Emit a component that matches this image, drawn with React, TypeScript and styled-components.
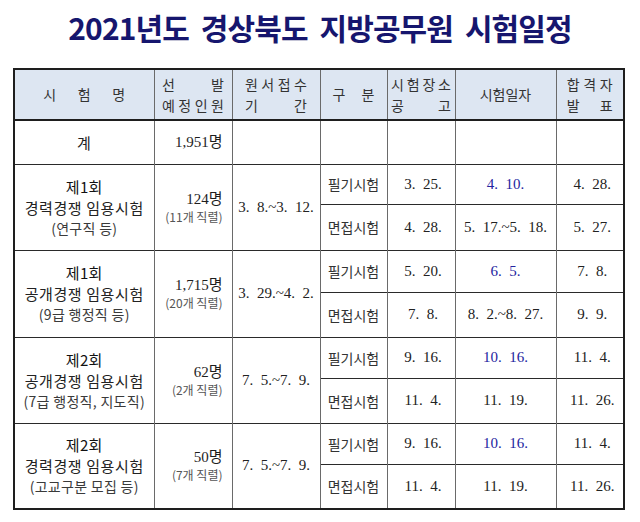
import React from "react";
import styled, { createGlobalStyle } from "styled-components";

const GlobalStyle = createGlobalStyle`
  html, body { margin: 0; padding: 0; background: #ffffff; }
  body { font-family: "Liberation Serif", "Noto Sans CJK KR", serif; color: #222; }
`;

const Page = styled.div`
  width: 640px;
  height: 522px;
  box-sizing: border-box;
  padding: 8px 0 0 13px;
  background: #fff;
`;

const Title = styled.h1`
  margin: 0 13px 0 0;
  height: 44px;
  text-align: center;
  font-family: "Noto Sans CJK KR", "Noto Sans", sans-serif;
  font-weight: 700;
  font-size: 30px;
  line-height: 38px;
  letter-spacing: -0.9px;
  word-spacing: 6px;
  color: #16166e;
`;

const Grid = styled.table`
  margin-top: 16px;
  border-collapse: collapse;
  table-layout: fixed;
  width: 610px;
  border: 2px solid #1e1e1e;
`;

const HeadRow = styled.tr`
  height: 51px;
  background: #dde6f2;
  border-bottom: 2px solid #1e1e1e;
`;

const BodyRow = styled.tr<{ $h: number }>`
  height: ${(p) => p.$h}px;
`;

const Th = styled.th`
  padding: 0;
  font-family: "Noto Sans CJK KR", sans-serif;
  font-weight: 400;
  font-size: 14px;
  line-height: 20.5px;
  color: #333;
  border-left: 1px solid #6a6a6a;
  text-align: center;
  vertical-align: middle;
`;

const Td = styled.td<{ $align?: "left" | "center" | "right"; $pr?: number; $pl?: number }>`
  padding: 0 ${(p) => p.$pr ?? 0}px 0 ${(p) => p.$pl ?? 0}px;
  border-left: 1px solid #6a6a6a;
  border-top: 1px solid #2a2a2a;
  text-align: ${(p) => p.$align ?? "center"};
  vertical-align: middle;
  font-size: 14px;
  color: #222;
  white-space: pre;
`;

const Spread = styled.span<{ $w: number }>`
  display: flex;
  justify-content: space-between;
  width: ${(p) => p.$w}px;
  margin: 0 auto;
`;

const NameLine = styled.div<{ $kind: "round" | "main" | "sub" }>`
  font-family: "Noto Sans CJK KR", sans-serif;
  font-size: ${(p) => (p.$kind === "sub" ? "14px" : "15px")};
  font-weight: 400;
  line-height: 21px;
  letter-spacing: ${(p) => (p.$kind === "main" ? "0.6px" : "0.3px")};
  color: ${(p) => (p.$kind === "sub" ? "#3a3a3a" : p.$kind === "round" ? "#111" : "#222")};
`;

const Count = styled.div`
  font-size: 15px;
  line-height: 18px;
  color: #1e1e1e;
`;

const CountSub = styled.div`
  font-family: "Noto Sans CJK KR", sans-serif;
  font-size: 12px;
  line-height: 17px;
  color: #555;
`;

const Kind = styled.span`
  font-family: "Noto Sans CJK KR", sans-serif;
  font-size: 14px;
  color: #333;
`;

const DateText = styled.span<{ $blue?: boolean }>`
  font-family: "Liberation Serif", serif;
  font-size: 15px;
  color: ${(p) => (p.$blue ? "#2424a0" : "#222")};
`;

type Sub = { kind: string; notice: string; date: string; blue?: boolean; result: string };
type Group = {
  round: string;
  main: string;
  sub: string;
  count: string;
  jobs: string;
  period: string;
  heights: [number, number];
  rows: [Sub, Sub];
};

const groups: Group[] = [
  {
    round: "제1회",
    main: "경력경쟁 임용시험",
    sub: "(연구직 등)",
    count: "124명",
    jobs: "(11개 직렬)",
    period: "3.  8.~3.  12.",
    heights: [40, 46],
    rows: [
      { kind: "필기시험", notice: "3.  25.", date: "4.  10.", blue: true, result: "4.  28." },
      { kind: "면접시험", notice: "4.  28.", date: "5.  17.~5.  18.", result: "5.  27." },
    ],
  },
  {
    round: "제1회",
    main: "공개경쟁 임용시험",
    sub: "(9급 행정직 등)",
    count: "1,715명",
    jobs: "(20개 직렬)",
    period: "3.  29.~4.  2.",
    heights: [42, 45],
    rows: [
      { kind: "필기시험", notice: "5.  20.", date: "6.  5.", blue: true, result: "7.  8." },
      { kind: "면접시험", notice: "7.  8.", date: "8.  2.~8.  27.", result: "9.  9." },
    ],
  },
  {
    round: "제2회",
    main: "공개경쟁 임용시험",
    sub: "(7급 행정직, 지도직)",
    count: "62명",
    jobs: "(2개 직렬)",
    period: "7.  5.~7.  9.",
    heights: [41, 45],
    rows: [
      { kind: "필기시험", notice: "9.  16.", date: "10.  16.", blue: true, result: "11.  4." },
      { kind: "면접시험", notice: "11.  4.", date: "11.  19.", result: "11.  26." },
    ],
  },
  {
    round: "제2회",
    main: "경력경쟁 임용시험",
    sub: "(고교구분 모집 등)",
    count: "50명",
    jobs: "(7개 직렬)",
    period: "7.  5.~7.  9.",
    heights: [41, 45],
    rows: [
      { kind: "필기시험", notice: "9.  16.", date: "10.  16.", blue: true, result: "11.  4." },
      { kind: "면접시험", notice: "11.  4.", date: "11.  19.", result: "11.  26." },
    ],
  },
];

const chars = (s: string) => s.split("").map((c, i) => <span key={i}>{c}</span>);

export default function App() {
  return (
    <Page>
      <GlobalStyle />
      <Title>2021년도 경상북도 지방공무원 시험일정</Title>
      <Grid>
        <colgroup>
          <col style={{ width: 140 }} />
          <col style={{ width: 78 }} />
          <col style={{ width: 88 }} />
          <col style={{ width: 67 }} />
          <col style={{ width: 68 }} />
          <col style={{ width: 101 }} />
          <col style={{ width: 68 }} />
        </colgroup>
        <thead>
          <HeadRow>
            <Th>
              <Spread $w={82}>{chars("시험명")}</Spread>
            </Th>
            <Th>
              <Spread $w={62}>{chars("선발")}</Spread>
              <Spread $w={62}>{chars("예정인원")}</Spread>
            </Th>
            <Th>
              <Spread $w={62}>{chars("원서접수")}</Spread>
              <Spread $w={62}>{chars("기간")}</Spread>
            </Th>
            <Th>
              <Spread $w={42}>{chars("구분")}</Spread>
            </Th>
            <Th>
              <Spread $w={60}>{chars("시험장소")}</Spread>
              <Spread $w={60}>{chars("공고")}</Spread>
            </Th>
            <Th>시험일자</Th>
            <Th>
              <Spread $w={46}>{chars("합격자")}</Spread>
              <Spread $w={46}>{chars("발표")}</Spread>
            </Th>
          </HeadRow>
        </thead>
        <tbody>
          <BodyRow $h={44}>
            <Td>
              <NameLine $kind="main">계</NameLine>
            </Td>
            <Td $align="right" $pr={9}>
              <Count>1,951명</Count>
            </Td>
            <Td />
            <Td />
            <Td />
            <Td />
            <Td />
          </BodyRow>
          {groups.map((g, gi) =>
            g.rows.map((r, ri) => (
              <BodyRow key={`${gi}-${ri}`} $h={g.heights[ri]}>
                {ri === 0 && (
                  <>
                    <Td rowSpan={2}>
                      <NameLine $kind="round">{g.round}</NameLine>
                      <NameLine $kind="main">{g.main}</NameLine>
                      <NameLine $kind="sub">{g.sub}</NameLine>
                    </Td>
                    <Td rowSpan={2} $align="right" $pr={9}>
                      <Count>{g.count}</Count>
                      <CountSub>{g.jobs}</CountSub>
                    </Td>
                    <Td rowSpan={2}>
                      <DateText>{g.period}</DateText>
                    </Td>
                  </>
                )}
                <Td>
                  <Kind>{r.kind}</Kind>
                </Td>
                <Td $pl={4}>
                  <DateText>{r.notice}</DateText>
                </Td>
                <Td>
                  <DateText $blue={r.blue}>{r.date}</DateText>
                </Td>
                <Td $pl={5}>
                  <DateText>{r.result}</DateText>
                </Td>
              </BodyRow>
            ))
          )}
        </tbody>
      </Grid>
    </Page>
  );
}
